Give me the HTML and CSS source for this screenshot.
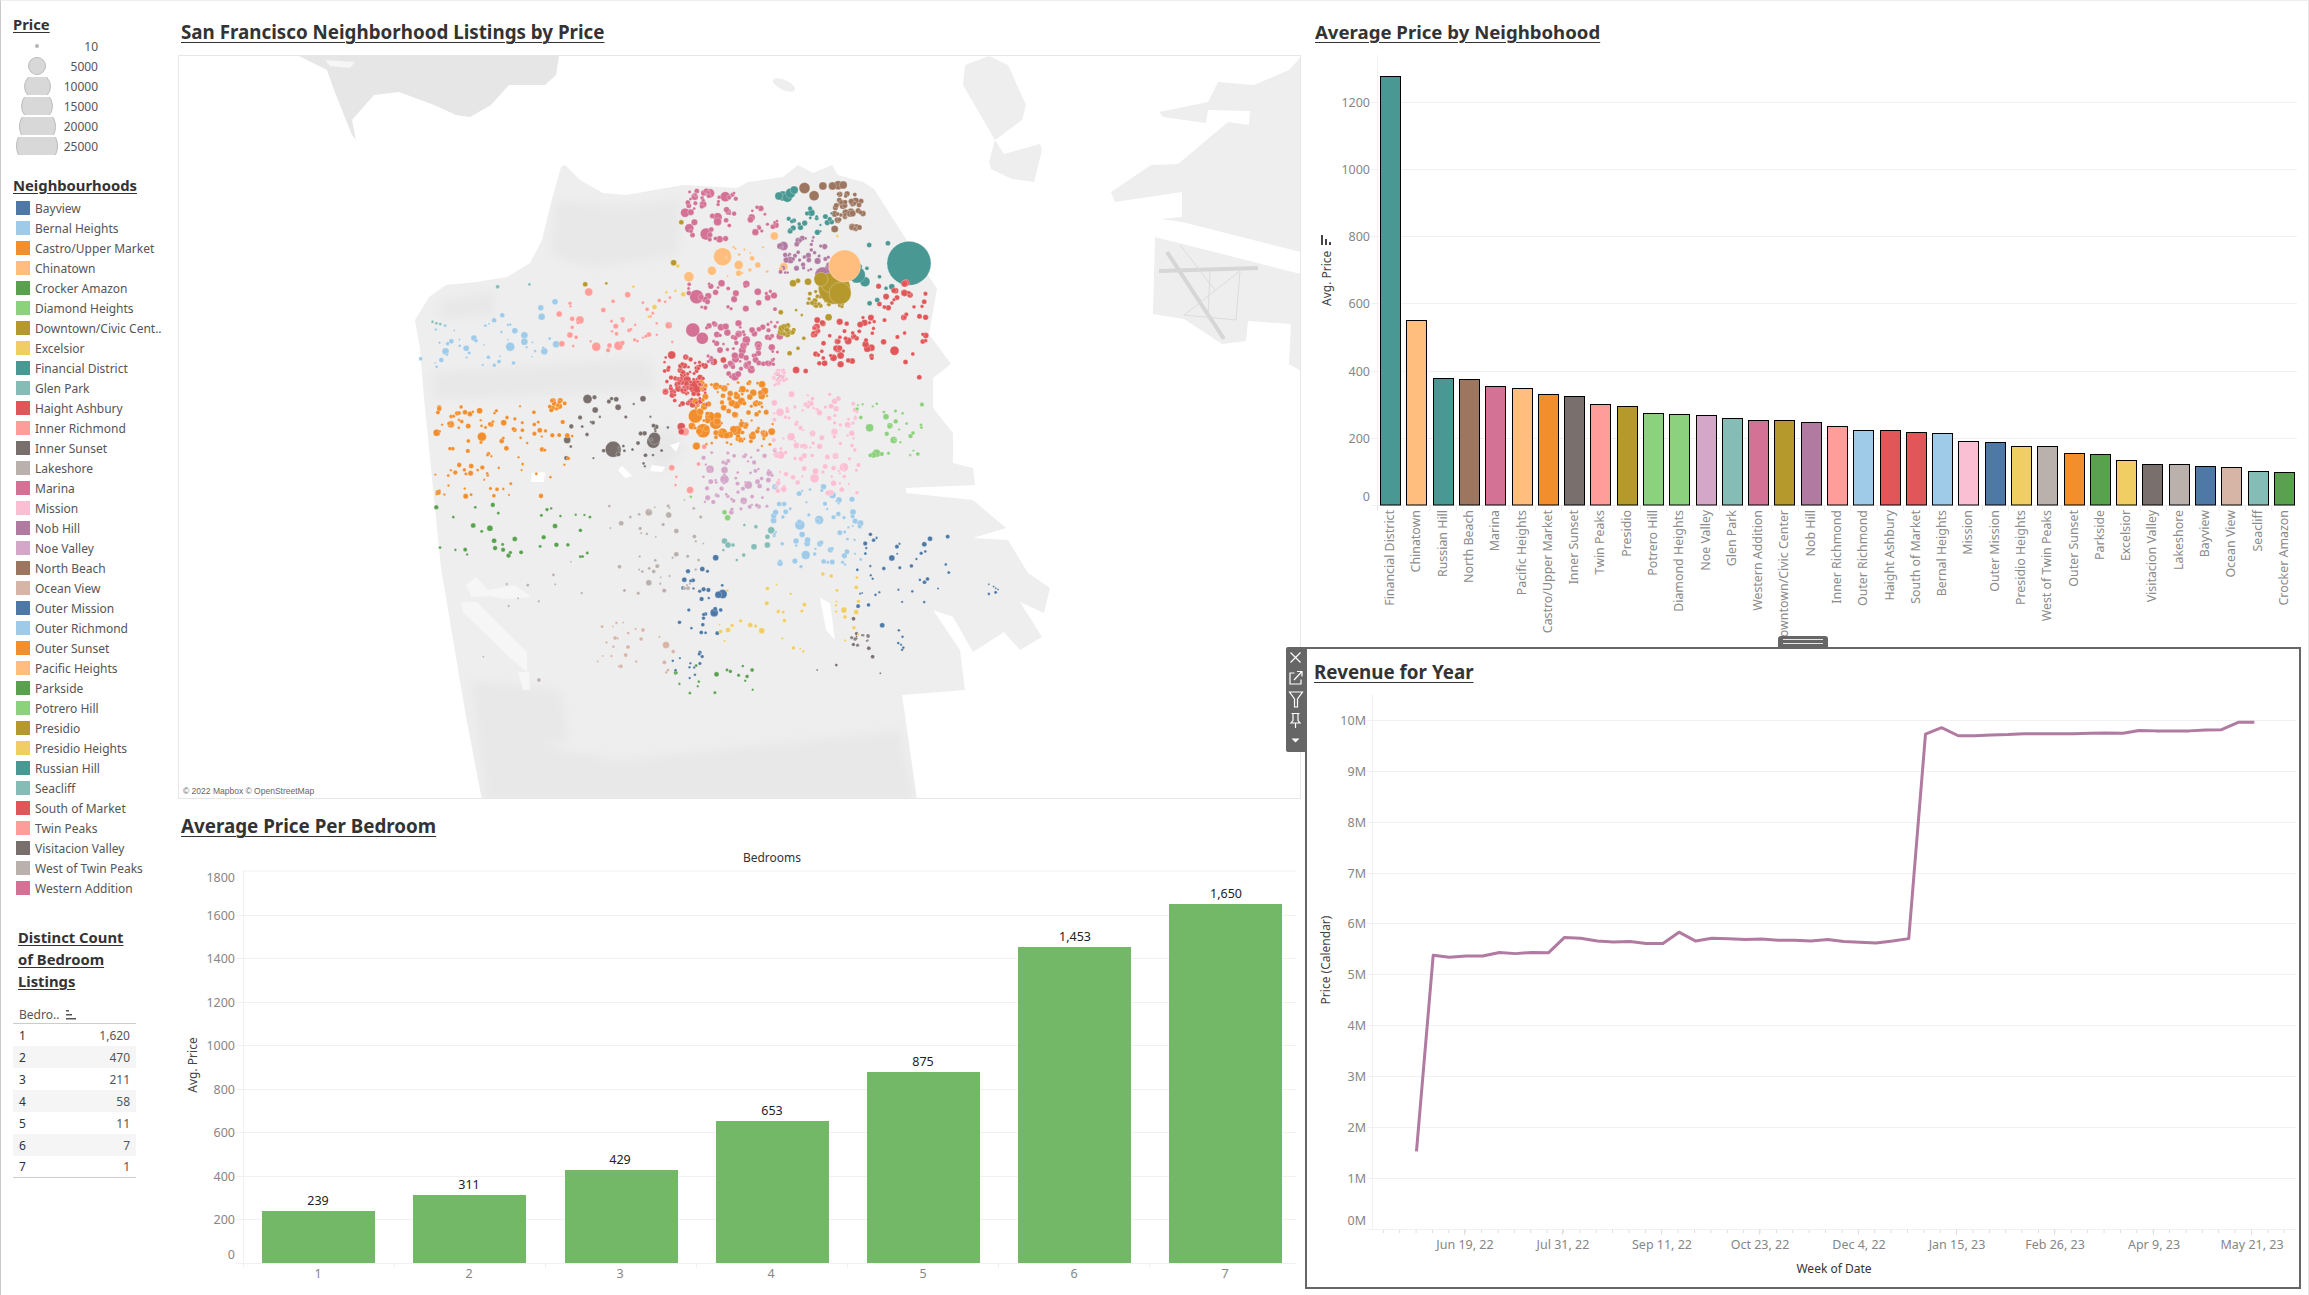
FILE: index.html
```html
<!DOCTYPE html>
<html lang="en">
<head>
<meta charset="utf-8">
<title>San Francisco Listings Dashboard</title>
<link rel="stylesheet" href="styles.css">
</head>
<body>
<main class="dash">

<aside class="side">
  <h3 class="side-title">Price</h3>
  <ul class="sizes">
    <li class="size-row"><span class="size-box"><i class="dot-key k1"></i></span><span class="size-val">10</span></li>
    <li class="size-row"><span class="size-box"><i class="dot-key k2"></i></span><span class="size-val">5000</span></li>
    <li class="size-row"><span class="size-box"><i class="dot-key k3"></i></span><span class="size-val">10000</span></li>
    <li class="size-row"><span class="size-box"><i class="dot-key k4"></i></span><span class="size-val">15000</span></li>
    <li class="size-row"><span class="size-box"><i class="dot-key k5"></i></span><span class="size-val">20000</span></li>
    <li class="size-row"><span class="size-box"><i class="dot-key k6"></i></span><span class="size-val">25000</span></li>
  </ul>
  <h3 class="side-title hoods-title">Neighbourhoods</h3>
  <ul class="hoods">
    <li><i class="sw blue"></i>Bayview</li>
    <li><i class="sw sky"></i>Bernal Heights</li>
    <li><i class="sw orange"></i>Castro/Upper Market</li>
    <li><i class="sw peach"></i>Chinatown</li>
    <li><i class="sw green"></i>Crocker Amazon</li>
    <li><i class="sw mint"></i>Diamond Heights</li>
    <li><i class="sw olive"></i>Downtown/Civic Cent..</li>
    <li><i class="sw yellow"></i>Excelsior</li>
    <li><i class="sw teal"></i>Financial District</li>
    <li><i class="sw foam"></i>Glen Park</li>
    <li><i class="sw red"></i>Haight Ashbury</li>
    <li><i class="sw salmon"></i>Inner Richmond</li>
    <li><i class="sw slate"></i>Inner Sunset</li>
    <li><i class="sw stone"></i>Lakeshore</li>
    <li><i class="sw rose"></i>Marina</li>
    <li><i class="sw blush"></i>Mission</li>
    <li><i class="sw plum"></i>Nob Hill</li>
    <li><i class="sw lilac"></i>Noe Valley</li>
    <li><i class="sw brown"></i>North Beach</li>
    <li><i class="sw tan"></i>Ocean View</li>
    <li><i class="sw blue"></i>Outer Mission</li>
    <li><i class="sw sky"></i>Outer Richmond</li>
    <li><i class="sw orange"></i>Outer Sunset</li>
    <li><i class="sw peach"></i>Pacific Heights</li>
    <li><i class="sw green"></i>Parkside</li>
    <li><i class="sw mint"></i>Potrero Hill</li>
    <li><i class="sw olive"></i>Presidio</li>
    <li><i class="sw yellow"></i>Presidio Heights</li>
    <li><i class="sw teal"></i>Russian Hill</li>
    <li><i class="sw foam"></i>Seacliff</li>
    <li><i class="sw red"></i>South of Market</li>
    <li><i class="sw salmon"></i>Twin Peaks</li>
    <li><i class="sw slate"></i>Visitacion Valley</li>
    <li><i class="sw stone"></i>West of Twin Peaks</li>
    <li><i class="sw rose"></i>Western Addition</li>
  </ul>
  <h3 class="side-title count-title">Distinct Count of Bedroom Listings</h3>
  <div class="tbl">
    <div class="tbl-head">Bedro..<svg class="sort-ic" width="11" height="10" viewBox="0 0 11 10"><rect width="3" height="1.5" y="0"/><rect width="6" height="1.5" y="4"/><rect width="10" height="1.5" y="8"/></svg></div>
    <div class="tbl-row"><b>1</b><span>1,620</span></div>
    <div class="tbl-row alt"><b>2</b><span>470</span></div>
    <div class="tbl-row"><b>3</b><span>211</span></div>
    <div class="tbl-row alt"><b>4</b><span>58</span></div>
    <div class="tbl-row"><b>5</b><span>11</span></div>
    <div class="tbl-row alt"><b>6</b><span>7</span></div>
    <div class="tbl-row"><b>7</b><span>1</span></div>
  </div>
</aside>

<section class="mid">
  <h2 class="title map-title">San Francisco Neighborhood Listings by Price</h2>
  <div class="map-frame">
    <svg class="map" width="1121" height="742" viewBox="179 56 1121 742">
      <defs>
        <filter id="soft" x="-10%" y="-10%" width="120%" height="120%"><feGaussianBlur stdDeviation="5"/></filter>
        <filter id="edge" x="-2%" y="-2%" width="104%" height="104%"><feGaussianBlur stdDeviation=".6"/></filter>
        <polygon id="coast" points="415,320 429,297 446,285 476,282 507,277 530,263 542,240 551,203 561,167 565,165 580,180 603,193 626,195 683,185 737,188 748,182 783,177 798,165 813,173 832,165 838,175 863,182 874,189 906,239 937,289 929,334 951,364 933,378 933,408 953,433 953,463 973,468 975,485 906,488 906,493 973,500 1006,528 973,538 1008,540 1028,573 1050,588 1044,613 1020,602 1042,637 1020,650 1004,632 973,652 953,617 933,610 960,650 965,690 902,695 906,722 917,800 482,800 466,717 441,568 424,398 420,349"/>
        <clipPath id="coast-clip"><use href="#coast"/></clipPath>
      </defs>
      <g class="land-dark" filter="url(#edge)">
        <polygon points="299,56 327,70 334,90 352,135 356,140 352,120 374,95 399,92 434,105 456,115 470,117 491,105 509,85 545,85 556,75 559,56"/>
      </g>
      <g class="land-top-gap" filter="url(#edge)">
        <polygon points="325,60 355,62 350,68 330,66"/>
      </g>
      <g class="land" filter="url(#edge)">
        <ellipse cx="784" cy="85" rx="12" ry="5" transform="rotate(25 784 85)"/>
        <polygon points="965,65 989,56 1008,65 1026,105 1022,120 995,140 963,85"/>
        <polygon points="995,140 1004,154 1040,144 1042,150 1034,182 1012,179 991,169 989,162"/>
        <polygon points="1159,112 1208,102 1218,82 1254,85 1289,70 1301,57 1301,252 1182,222 1161,219 1182,217 1182,192 1115,202 1111,192 1151,165 1178,164 1228,122 1249,125 1250,111 1208,110 1206,123 1163,117"/>
        <polygon points="1155,237 1301,274 1301,371 1289,364 1291,324 1248,321 1246,341 1222,344 1184,319 1153,314"/>
        <use href="#coast"/>
      </g>
      <g clip-path="url(#coast-clip)">
        <g class="land-shade" filter="url(#soft)">
          <polygon points="555,200 604,205 626,207 680,198 680,255 590,268 550,255"/>
          <polygon points="431,372 648,358 658,390 433,400"/>
          <polygon points="438,302 495,290 494,315 440,320"/>
          <polygon points="480,735 620,760 900,730 915,800 485,800"/>
          <polygon points="470,680 560,690 570,740 480,760"/>
          <polygon points="640,445 670,425 685,450 660,475"/>
        </g>
      </g>
      <g class="land-lake" filter="url(#edge)">
        <polygon points="466,585 476,577 488,590 515,585 531,597 505,599 490,596 472,597"/>
        <polygon points="461,602 477,602 527,652 527,672 509,657 463,612"/>
        <polygon points="518,672 529,672 530,690 523,690"/>
      </g>
      <g class="land-gap">
        <polygon points="532,473 545,472 544,482 531,482"/>
        <polygon points="652,465 665,467 662,472 650,471"/>
        <polygon points="622,466 632,476 625,478 618,470"/>
        <polygon points="670,445 680,442 676,452"/>
        <polygon points="820,598 830,603 835,640 826,630"/>
      </g>
      <g class="runways">
        <line x1="1167" y1="252" x2="1224" y2="339"/>
        <line x1="1159" y1="271" x2="1258" y2="268"/>
      </g>
      <g class="taxi">
        <line x1="1184" y1="315" x2="1236" y2="320"/>
        <line x1="1236" y1="320" x2="1240" y2="271"/>
        <line x1="1210" y1="271" x2="1208" y2="316"/>
        <line x1="1184" y1="315" x2="1240" y2="271"/>
        <line x1="1180" y1="245" x2="1215" y2="290"/>
      </g>
      <g id="dots"></g>
      <rect class="attr-bg" x="180" y="784" width="128" height="13"/>
      <text class="attr" x="183" y="794">© 2022 Mapbox © OpenStreetMap</text>
    </svg>
  </div>

  <h2 class="title bed-title">Average Price Per Bedroom</h2>
  <svg class="chart" width="1124" height="455" viewBox="178 840 1124 455">
    <text class="ax-head" x="772" y="862" text-anchor="middle">Bedrooms</text>
    <g class="grid">
      <line x1="243" y1="871" x2="1296" y2="871"/>
      <line x1="236" y1="915.5" x2="1296" y2="915.5"/>
      <line x1="236" y1="958.5" x2="1296" y2="958.5"/>
      <line x1="236" y1="1002.5" x2="1296" y2="1002.5"/>
      <line x1="236" y1="1045.5" x2="1296" y2="1045.5"/>
      <line x1="236" y1="1089.5" x2="1296" y2="1089.5"/>
      <line x1="236" y1="1132.5" x2="1296" y2="1132.5"/>
      <line x1="236" y1="1176.5" x2="1296" y2="1176.5"/>
      <line x1="236" y1="1219.5" x2="1296" y2="1219.5"/>
      <line x1="236" y1="1263.5" x2="1296" y2="1263.5"/>
      <line x1="243.5" y1="870" x2="243.5" y2="1268"/>
      <line x1="394.5" y1="1263" x2="394.5" y2="1268"/>
      <line x1="545.5" y1="1263" x2="545.5" y2="1268"/>
      <line x1="696.5" y1="1263" x2="696.5" y2="1268"/>
      <line x1="847.5" y1="1263" x2="847.5" y2="1268"/>
      <line x1="998.5" y1="1263" x2="998.5" y2="1268"/>
      <line x1="1149.5" y1="1263" x2="1149.5" y2="1268"/>
    </g>
    <g class="tick end">
      <text x="235" y="882">1800</text>
      <text x="235" y="920">1600</text>
      <text x="235" y="963">1400</text>
      <text x="235" y="1007">1200</text>
      <text x="235" y="1050">1000</text>
      <text x="235" y="1094">800</text>
      <text x="235" y="1137">600</text>
      <text x="235" y="1181">400</text>
      <text x="235" y="1224">200</text>
      <text x="235" y="1259">0</text>
    </g>
    <text class="ax-title" transform="translate(197 1065) rotate(-90)" text-anchor="middle">Avg. Price</text>
    <g class="bedbar">
      <rect x="262" y="1211" width="113" height="52"/>
      <rect x="413" y="1195" width="113" height="68"/>
      <rect x="565" y="1170" width="113" height="93"/>
      <rect x="716" y="1121" width="113" height="142"/>
      <rect x="867" y="1072" width="113" height="191"/>
      <rect x="1018" y="947" width="113" height="316"/>
      <rect x="1169" y="904" width="113" height="359"/>
    </g>
    <g class="val">
      <text x="318" y="1205">239</text>
      <text x="469" y="1189">311</text>
      <text x="620" y="1164">429</text>
      <text x="772" y="1115">653</text>
      <text x="923" y="1066">875</text>
      <text x="1075" y="941">1,453</text>
      <text x="1226" y="898">1,650</text>
    </g>
    <g class="tick mid-a">
      <text x="318" y="1278">1</text>
      <text x="469" y="1278">2</text>
      <text x="620" y="1278">3</text>
      <text x="771" y="1278">4</text>
      <text x="923" y="1278">5</text>
      <text x="1074" y="1278">6</text>
      <text x="1225" y="1278">7</text>
    </g>
  </svg>
</section>

<section class="right">
  <div class="top-chart">
    <h2 class="title nb-title">Average Price by Neighbohood</h2>
    <svg class="chart" width="1007" height="602" viewBox="1301 45 1007 602">
      <g class="grid">
        <line x1="1376.5" y1="55" x2="1376.5" y2="509"/>
        <line x1="1370" y1="102.5" x2="2296" y2="102.5"/>
        <line x1="1370" y1="169.5" x2="2296" y2="169.5"/>
        <line x1="1370" y1="236.5" x2="2296" y2="236.5"/>
        <line x1="1370" y1="303.5" x2="2296" y2="303.5"/>
        <line x1="1370" y1="371.5" x2="2296" y2="371.5"/>
        <line x1="1370" y1="438.5" x2="2296" y2="438.5"/>
        <line x1="1370" y1="505.5" x2="2296" y2="505.5"/>
      </g>
      <g class="nticks"><line x1="1376" y1="508" x2="2296" y2="508"/></g>
      <g class="tick end">
        <text x="1369" y="107">1200</text>
        <text x="1369" y="174">1000</text>
        <text x="1369" y="241">800</text>
        <text x="1369" y="308">600</text>
        <text x="1369" y="376">400</text>
        <text x="1369" y="443">200</text>
        <text x="1369" y="501">0</text>
      </g>
      <text class="ax-title" transform="translate(1330 306) rotate(-90)">Avg. Price</text>
      <g class="sort-ax">
        <rect x="1320" y="235" width="2" height="10"/>
        <rect x="1324" y="239" width="2" height="6"/>
        <rect x="1328" y="242" width="2" height="3"/>
      </g>
      <g class="nbars">
        <rect class="teal" x="1379.5" y="76.5" width="20" height="428.5"/>
        <rect class="peach" x="1405.5" y="320.5" width="20" height="184.5"/>
        <rect class="teal" x="1432.5" y="378.5" width="20" height="126.5"/>
        <rect class="brown" x="1458.5" y="379.5" width="20" height="125.5"/>
        <rect class="rose" x="1484.5" y="386.5" width="20" height="118.5"/>
        <rect class="peach" x="1511.5" y="388.5" width="20" height="116.5"/>
        <rect class="orange" x="1537.5" y="394.5" width="20" height="110.5"/>
        <rect class="slate" x="1563.5" y="396.5" width="20" height="108.5"/>
        <rect class="salmon" x="1589.5" y="404.5" width="20" height="100.5"/>
        <rect class="olive" x="1616.5" y="406.5" width="20" height="98.5"/>
        <rect class="mint" x="1642.5" y="413.5" width="20" height="91.5"/>
        <rect class="mint" x="1668.5" y="414.5" width="20" height="90.5"/>
        <rect class="lilac" x="1695.5" y="415.5" width="20" height="89.5"/>
        <rect class="foam" x="1721.5" y="418.5" width="20" height="86.5"/>
        <rect class="rose" x="1747.5" y="420.5" width="20" height="84.5"/>
        <rect class="olive" x="1773.5" y="420.5" width="20" height="84.5"/>
        <rect class="plum" x="1800.5" y="422.5" width="20" height="82.5"/>
        <rect class="salmon" x="1826.5" y="426.5" width="20" height="78.5"/>
        <rect class="sky" x="1852.5" y="430.5" width="20" height="74.5"/>
        <rect class="red" x="1879.5" y="430.5" width="20" height="74.5"/>
        <rect class="red" x="1905.5" y="432.5" width="20" height="72.5"/>
        <rect class="sky" x="1931.5" y="433.5" width="20" height="71.5"/>
        <rect class="blush" x="1957.5" y="441.5" width="20" height="63.5"/>
        <rect class="blue" x="1984.5" y="442.5" width="20" height="62.5"/>
        <rect class="yellow" x="2010.5" y="446.5" width="20" height="58.5"/>
        <rect class="stone" x="2036.5" y="446.5" width="20" height="58.5"/>
        <rect class="orange" x="2063.5" y="453.5" width="20" height="51.5"/>
        <rect class="green" x="2089.5" y="454.5" width="20" height="50.5"/>
        <rect class="yellow" x="2115.5" y="460.5" width="20" height="44.5"/>
        <rect class="slate" x="2141.5" y="464.5" width="20" height="40.5"/>
        <rect class="stone" x="2168.5" y="464.5" width="20" height="40.5"/>
        <rect class="blue" x="2194.5" y="466.5" width="20" height="38.5"/>
        <rect class="tan" x="2220.5" y="467.5" width="20" height="37.5"/>
        <rect class="foam" x="2247.5" y="471.5" width="20" height="33.5"/>
        <rect class="green" x="2273.5" y="472.5" width="20" height="32.5"/>
      </g>
      <g class="cats">
        <text transform="translate(1393 510) rotate(-90)">Financial District</text>
        <text transform="translate(1419 510) rotate(-90)">Chinatown</text>
        <text transform="translate(1446 510) rotate(-90)">Russian Hill</text>
        <text transform="translate(1472 510) rotate(-90)">North Beach</text>
        <text transform="translate(1498 510) rotate(-90)">Marina</text>
        <text transform="translate(1525 510) rotate(-90)">Pacific Heights</text>
        <text transform="translate(1551 510) rotate(-90)">Castro/Upper Market</text>
        <text transform="translate(1577 510) rotate(-90)">Inner Sunset</text>
        <text transform="translate(1603 510) rotate(-90)">Twin Peaks</text>
        <text transform="translate(1630 510) rotate(-90)">Presidio</text>
        <text transform="translate(1656 510) rotate(-90)">Potrero Hill</text>
        <text transform="translate(1682 510) rotate(-90)">Diamond Heights</text>
        <text transform="translate(1709 510) rotate(-90)">Noe Valley</text>
        <text transform="translate(1735 510) rotate(-90)">Glen Park</text>
        <text transform="translate(1761 510) rotate(-90)">Western Addition</text>
        <text transform="translate(1787 510) rotate(-90)">Downtown/Civic Center</text>
        <text transform="translate(1814 510) rotate(-90)">Nob Hill</text>
        <text transform="translate(1840 510) rotate(-90)">Inner Richmond</text>
        <text transform="translate(1866 510) rotate(-90)">Outer Richmond</text>
        <text transform="translate(1893 510) rotate(-90)">Haight Ashbury</text>
        <text transform="translate(1919 510) rotate(-90)">South of Market</text>
        <text transform="translate(1945 510) rotate(-90)">Bernal Heights</text>
        <text transform="translate(1971 510) rotate(-90)">Mission</text>
        <text transform="translate(1998 510) rotate(-90)">Outer Mission</text>
        <text transform="translate(2024 510) rotate(-90)">Presidio Heights</text>
        <text transform="translate(2050 510) rotate(-90)">West of Twin Peaks</text>
        <text transform="translate(2077 510) rotate(-90)">Outer Sunset</text>
        <text transform="translate(2103 510) rotate(-90)">Parkside</text>
        <text transform="translate(2129 510) rotate(-90)">Excelsior</text>
        <text transform="translate(2155 510) rotate(-90)">Visitacion Valley</text>
        <text transform="translate(2182 510) rotate(-90)">Lakeshore</text>
        <text transform="translate(2208 510) rotate(-90)">Bayview</text>
        <text transform="translate(2234 510) rotate(-90)">Ocean View</text>
        <text transform="translate(2261 510) rotate(-90)">Seacliff</text>
        <text transform="translate(2287 510) rotate(-90)">Crocker Amazon</text>
      </g>
    </svg>
  </div>

  <div class="rev-panel">
    <div class="toolbar">
      <svg width="19" height="105" viewBox="0 0 19 105">
        <path class="tb-line" d="M4.500 5.500l10 10M14.500 5.500l-10 10"/>
        <path class="tb-line" d="M8.500 26H4v11h11v-4.500M8 33l7.500-8M11 24.500h5v5"/>
        <path class="tb-line" d="M3.500 45h13l-5 7v8h-3v-8z"/>
        <path class="tb-line" d="M5.500 66.500h8M7 66.500v7l-2 2.500h9l-2-2.500v-7M9.500 76v5"/>
        <path class="tb-fill" d="M5.500 91.500h8l-4 4z"/>
      </svg>
    </div>
    <div class="handle"><i></i><i></i></div>
    <h2 class="title rev-title">Revenue for Year</h2>
    <svg class="chart" width="992" height="602" viewBox="1307 685 992 602">
      <g class="grid">
        <line x1="1372.500" y1="694" x2="1372.500" y2="1230"/>
        <line x1="1367" y1="720.500" x2="2296" y2="720.500"/>
        <line x1="1367" y1="771.500" x2="2296" y2="771.500"/>
        <line x1="1367" y1="822.500" x2="2296" y2="822.500"/>
        <line x1="1367" y1="873.500" x2="2296" y2="873.500"/>
        <line x1="1367" y1="923.500" x2="2296" y2="923.500"/>
        <line x1="1367" y1="974.500" x2="2296" y2="974.500"/>
        <line x1="1367" y1="1025.500" x2="2296" y2="1025.500"/>
        <line x1="1367" y1="1076.500" x2="2296" y2="1076.500"/>
        <line x1="1367" y1="1127.500" x2="2296" y2="1127.500"/>
        <line x1="1367" y1="1178.500" x2="2296" y2="1178.500"/>
        <line x1="1367" y1="1229.500" x2="2296" y2="1229.500"/>
      </g>
      <g class="minor"><line x1="1382.800" y1="1231.500" x2="2296" y2="1231.500"/></g>
      <g class="major">
        <line x1="1464.500" y1="1229" x2="1464.500" y2="1235"/>
        <line x1="1562.500" y1="1229" x2="1562.500" y2="1235"/>
        <line x1="1661.500" y1="1229" x2="1661.500" y2="1235"/>
        <line x1="1759.500" y1="1229" x2="1759.500" y2="1235"/>
        <line x1="1858.500" y1="1229" x2="1858.500" y2="1235"/>
        <line x1="1956.500" y1="1229" x2="1956.500" y2="1235"/>
        <line x1="2054.500" y1="1229" x2="2054.500" y2="1235"/>
        <line x1="2153.500" y1="1229" x2="2153.500" y2="1235"/>
        <line x1="2251.500" y1="1229" x2="2251.500" y2="1235"/>
      </g>
      <g class="tick end">
        <text x="1366" y="725">10M</text>
        <text x="1366" y="776">9M</text>
        <text x="1366" y="827">8M</text>
        <text x="1366" y="878">7M</text>
        <text x="1366" y="928">6M</text>
        <text x="1366" y="979">5M</text>
        <text x="1366" y="1030">4M</text>
        <text x="1366" y="1081">3M</text>
        <text x="1366" y="1132">2M</text>
        <text x="1366" y="1183">1M</text>
        <text x="1366" y="1225">0M</text>
      </g>
      <text class="ax-title" transform="translate(1330 960) rotate(-90)" text-anchor="middle">Price (Calendar)</text>
      <g class="rev-line" transform="translate(1300 660) scale(.6435 .405)">
        <polyline vector-effect="non-scaling-stroke" points="181,1213 207,729 232,734 258,731 284,731 310,722 335,725 360,722 386,723 411,685 436,687 462,694 487,696 513,695 538,700 564,700 589,672 615,694 640,687 666,688 692,690 717,689 743,692 768,692 794,694 820,690 845,695 870,697 895,699 921,694 946,688 972,183 997,167 1023,187 1048,187 1074,185 1100,184 1125,182 1151,182 1177,182 1202,182 1228,181 1253,180 1279,181 1304,174 1330,175 1356,175 1382,175 1407,173 1432,172 1458,154 1483,154"/>
      </g>
      <g class="tick mid-a">
        <text x="1465" y="1249">Jun 19, 22</text>
        <text x="1563" y="1249">Jul 31, 22</text>
        <text x="1662" y="1249">Sep 11, 22</text>
        <text x="1760" y="1249">Oct 23, 22</text>
        <text x="1859" y="1249">Dec 4, 22</text>
        <text x="1957" y="1249">Jan 15, 23</text>
        <text x="2055" y="1249">Feb 26, 23</text>
        <text x="2154" y="1249">Apr 9, 23</text>
        <text x="2252" y="1249">May 21, 23</text>
      </g>
      <text class="ax-head" x="1834" y="1273" text-anchor="middle">Week of Date</text>
    </svg>
  </div>
</section>

</main>
<script src="dots.js"></script>
</body>
</html>
```

FILE: styles.css
```css
* { box-sizing: border-box; }
html, body { margin: 0; padding: 0; background: #fff; }
body { font-family: "Noto Sans", "Open Sans", sans-serif; color: #444; overflow: hidden; }
ul { list-style: none; margin: 0; padding: 0; }
h2, h3 { margin: 0; }

.dash {
  display: grid;
  grid-template-columns: 177px 1124px 1007px;
  width: 2309px;
  height: 1295px;
  border-top: 1px solid #eee;
  border-left: 1px solid #c9c9c9;
  border-right: 1px solid #e6e6e6;
  overflow: hidden;
}

/* sidebar */
.side { padding: 13px 0 0 12px; }
.side-title {
  font-size: 14.800px;
  line-height: 20px;
  font-weight: 700;
  color: #333;
  text-decoration: underline;
  text-underline-offset: 2px;
  text-decoration-thickness: 1px;
}
.sizes { margin-top: 2px; width: 85px; }
.size-row { display: flex; height: 20px; align-items: center; justify-content: space-between; font-size: 12px; color: #555; }
.size-box { width: 48px; height: 18px; display: flex; align-items: center; justify-content: center; overflow: hidden; }
.dot-key { flex: none; display: block; border-radius: 50%; background: #d8d8d8; border: 1.5px solid #bcbcbc; }
.k1 { width: 4px; height: 4px; background: #b5b5b5; border: 0; }
.k2 { width: 18px; height: 18px; }
.k3 { width: 27px; height: 27px; }
.k4 { width: 32px; height: 32px; }
.k5 { width: 37px; height: 37px; }
.k6 { width: 42px; height: 42px; }
.hoods-title { margin-top: 19px; }
.hoods { margin-top: 3px; }
.hoods li { display: flex; align-items: center; height: 20px; font-size: 12px; color: #555; white-space: nowrap; }
.sw { flex: none; width: 14px; height: 14px; margin: 0 5px 0 3px; }

.blue { background: #4e79a7; fill: #4e79a7; }
.sky { background: #a0cbe8; fill: #a0cbe8; }
.orange { background: #f28e2b; fill: #f28e2b; }
.peach { background: #ffbe7d; fill: #ffbe7d; }
.green { background: #59a14f; fill: #59a14f; }
.mint { background: #8cd17d; fill: #8cd17d; }
.olive { background: #b6992d; fill: #b6992d; }
.yellow { background: #f1ce63; fill: #f1ce63; }
.teal { background: #499894; fill: #499894; }
.foam { background: #86bcb6; fill: #86bcb6; }
.red { background: #e15759; fill: #e15759; }
.salmon { background: #ff9d9a; fill: #ff9d9a; }
.slate { background: #79706e; fill: #79706e; }
.stone { background: #bab0ac; fill: #bab0ac; }
.rose { background: #d37295; fill: #d37295; }
.blush { background: #fabfd2; fill: #fabfd2; }
.plum { background: #b07aa1; fill: #b07aa1; }
.lilac { background: #d4a6c8; fill: #d4a6c8; }
.brown { background: #9d7660; fill: #9d7660; }
.tan { background: #d7b5a6; fill: #d7b5a6; }

.count-title { margin-top: 28px; padding-left: 5px; width: 122px; line-height: 22px; }
.tbl { margin-top: 14px; width: 123px; font-size: 12px; }
.tbl-head { height: 18px; padding-left: 6px; border-bottom: 1px solid #ccc; display: flex; align-items: center; gap: 7px; color: #555; line-height: 16px; }
.sort-ic { fill: #555; }
.tbl-row { height: 22px; display: flex; align-items: center; justify-content: space-between; padding: 0 6px; color: #555; }
.tbl-row b { font-weight: 400; color: #333; }
.tbl-row.alt { background: #f5f5f5; }
.tbl-row:last-child { border-bottom: 1px solid #ccc; }

/* titles */
.title { font-size: 18.800px; line-height: 26px; font-weight: 700; color: #333; text-decoration: underline; text-underline-offset: 3px; text-decoration-thickness: 1px; }
.map-title { padding: 18px 0 10px 3px; }
.bed-title { padding: 14px 0 1px 3px; }
.nb-title { padding: 18px 0 0 13px; font-size: 18.600px; }
.rev-title { padding: 10px 0 0 7px; }

/* map */
.map-frame { width: 1123px; height: 744px; border: 1px solid #e6e6e6; }
.map, .chart { display: block; }
.map { background: #fff; }
.land { fill: #eeeeee; }
.land-dark { fill: #e6e6e6; }
.land-top-gap { fill: #f6f6f6; }
.land-shade { fill: #e8e8e8; }
.land-lake { fill: #f6f6f6; }
.land-gap { fill: #fff; }
.runways line { stroke: #d6d6d6; stroke-width: 4; }
.taxi line { stroke: #dcdcdc; stroke-width: 1; }
.dot { stroke: #fff; stroke-opacity: .5; stroke-width: .5; }
.attr-bg { fill: #fff; opacity: .85; }
.attr { font: 8.500px "Liberation Sans", Arial, sans-serif; fill: #666; }

/* charts */
.chart text { font-family: "Noto Sans", "Open Sans", sans-serif; }
.grid line { stroke: #f1f1f1; stroke-width: 1; }
.tick text { font-size: 12.500px; fill: #868686; }
.end text { text-anchor: end; }
.mid-a text { text-anchor: middle; }
.ax-title { font-size: 12px; fill: #444; }
.ax-head { font-size: 12px; fill: #333; }
.val text { font-size: 12.500px; fill: #222; text-anchor: middle; }
.bedbar rect { fill: #72b866; }
.sort-ax rect { fill: #444; }
.nbars rect { stroke: #000; stroke-width: 1; }
.nticks line { stroke: #e8e8e8; stroke-width: 5; stroke-dasharray: 1 25.300; }
.cats text { font-size: 12.400px; fill: #8a8a8a; text-anchor: end; }
.rev-line polyline { fill: none; stroke: #b07aa1; stroke-width: 3; stroke-linejoin: round; }
.minor line { stroke: #ddd; stroke-width: 3; stroke-dasharray: 1 15.380; }
.major line { stroke: #e2e2e2; stroke-width: 1; }

/* right column */
.top-chart { height: 646px; overflow: hidden; }
.rev-panel { position: relative; width: 996px; height: 642px; margin-left: 3px; border: 2px solid #666; }
.toolbar { position: absolute; left: -21px; top: -2px; width: 19px; height: 105px; background: #666; border-radius: 2px 0 0 2px; }
.toolbar svg { display: block; }
.tb-line { fill: none; stroke: #fff; stroke-width: 1.200; }
.tb-fill { fill: #fff; }
.handle { position: absolute; left: 471px; top: -13px; width: 50px; height: 11px; background: #666; border-radius: 3px 3px 0 0; display: flex; flex-direction: column; justify-content: center; gap: 3px; padding: 0 5px; }
.handle i { display: block; height: 1px; background: #e6e6e6; }
```

FILE: dots.js
```js
// Listings on the map, grouped by neighbourhood. Coordinates are in the map's page space.
(function () {
  var seed = 20220611;
  function rnd() { seed = (seed * 1664525 + 1013904223) % 4294967296; return seed / 4294967296; }
  var toX = function (X) { return 400 + X / 2.613; };
  var toY = function (Y) { return 160 + Y / 3; };
  var dots = [];
  function add(color, list) { list.forEach(function (d) { dots.push([color, toX(d[0]), toY(d[1]), d[2]]); }); }
  function scatter(color, X0, Y0, X1, Y1, n, r0, r1) {
    for (var i = 0; i < n; i++) {
      var t = rnd();
      dots.push([color, toX(X0 + rnd() * (X1 - X0)), toY(Y0 + rnd() * (Y1 - Y0)), r0 + Math.pow(t, 1.3) * (r1 - r0)]);
    }
  }
  // Marina and Western Addition
  add('rose', [[745,158,4.5],[756,205,4.5],[800,222,6],[830,172,4.5],[830,185,4],[810,100,4.5],[850,110,5],[770,110,3.5],[835,238,3.5],[775,410,7],[765,510,7],[790,535,6],[905,372,3.5],[935,395,3.5],[840,370,3.5],[875,650,4],[905,540,4],[920,510,3]]);
  scatter('rose', 750,90,880,240,40,1.5,3.5);
  scatter('rose', 910,140,985,220,15,1.5,3.5);
  scatter('rose', 745,370,990,450,26,1.5,3.5);
  scatter('rose', 800,485,1000,660,85,1.5,3.8);
  // Russian Hill and Financial District
  add('teal', [[1000,108,5],[1012,112,5],[1020,100,5],[1030,90,4],[990,108,4],[1075,158,3.5],[1330,310,22],[1215,365,5],[1285,380,3],[1190,360,3],[1275,250,2.5],[1226,255,2.5],[1247,420,2.5],[1227,430,2.5],[1253,350,2],[1270,385,2],[1200,320,3],[1220,325,2]]);
  scatter('teal', 990,140,1130,220,22,1.2,3);
  // North Beach
  add('brown', [[1057,84,5.5],[1082,107,5],[1105,78,4],[1130,78,4],[1145,76,4.5],[1158,75,4]]);
  scatter('brown', 1135,100,1210,210,42,1.8,3.8);
  // Nob Hill
  add('plum', [[1002,258,4.5],[1020,300,3.5]]);
  scatter('plum', 990,230,1140,340,46,1.3,3.2);
  // Pacific Heights
  add('peach', [[843,290,9],[815,332,4.5],[755,350,5],[885,315,4.5],[978,228,4],[1003,320,4],[935,315,3],[920,295,2.5],[885,340,3]]);
  scatter('peach', 800,260,1000,350,12,1,2.2);
  // Presidio Heights and Excelsior
  add('yellow', [[726,318,2],[610,380,1.5],[696,397,1.5],[720,392,1.5],[740,403,2.5],[665,441,2.5],[650,470,1.5],[1143,228,1.5]]);
  // Seacliff and Glen Park
  add('foam', [[255,380,2],[338,373,1.5],[85,485,1.5],[95,490,1.5],[105,492,1.5],[970,1111,3.5],[848,1143,3],[857,1155,3],[925,1160,3],[960,1155,3],[960,1130,2.5],[930,1100,2],[900,1095,1.5],[870,1155,2],[845,1170,1.5],[898,1185,2],[880,1200,1.5]]);
  // Outer Richmond
  add('sky', [[405,425,3],[368,443,3],[370,470,3.5],[267,466,2.5],[246,481,2.5],[300,512,3],[325,526,3.5],[325,545,3.5],[288,560,4.5],[377,574,3.5],[408,553,3.5],[193,534,3],[119,574,3.5],[108,600,2.5],[54,596,2],[134,544,2.5],[173,565,3],[96,620,1.500]]);
  scatter('sky', 80,490,400,620,32,1,2.2);
  // Inner Richmond
  add('salmon', [[493,396,4],[416,462,3],[470,480,4],[444,525,3],[513,560,4.5],[571,557,4.5],[595,404,3],[702,496,3.5],[423,551,3]]);
  scatter('salmon', 440,400,720,580,40,1.3,2.6);
  // Haight Ashbury
  add('red', [[772,680,7],[750,660,4],[710,585,4],[745,685,3.5],[735,800,4],[735,815,3],[820,605,3.5],[845,600,3]]);
  scatter('red', 690,590,800,740,85,1.3,3.4);
  // South of Market
  add('red', [[1292,572,4.5],[1221,566,3.5],[1321,606,2.5],[1357,652,2.5],[1340,582,2],[1035,630,3.5],[1060,633,2.500]]);
  scatter('red', 1080,470,1240,620,56,1.8,3.6);
  scatter('red', 1250,365,1375,560,34,1.8,3.5);
  // Castro/Upper Market
  add('orange', [[772,768,7],[792,812,7],[825,790,6],[810,770,5],[880,812,5],[843,820,5],[945,708,3.5],[895,688,3.5],[953,822,3.5]]);
  scatter('orange', 760,665,975,860,110,1.3,3.8);
  // Mission
  add('blush', [[993,757,4],[1022,830,4],[1160,922,4.5],[1083,955,4.5],[995,885,4],[1135,815,3.5]]);
  scatter('blush', 975,630,1010,690,24,1.5,2.5);
  scatter('blush', 975,700,1200,1000,110,1.3,3.2);
  // Noe Valley
  add('lilac', [[848,958,4.5],[810,928,4],[910,975,4],[898,1022,3.5],[848,930,3.5],[965,940,3]]);
  scatter('lilac', 790,870,985,1060,62,1.3,2.8);
  // Twin Peaks
  add('salmon', [[710,923,3],[758,990,3.5],[745,815,4],[795,860,2.5],[780,912,2],[720,975,1.5],[722,950,1.500]]);
  // Diamond Heights and Potrero Hill
  add('mint', [[1227,803,4],[1245,880,4],[1290,840,3.5],[1270,770,3],[1280,797,3],[1237,885,3],[848,1057,2.5],[856,1073,3],[760,1010,1.5],[743,1020,1]]);
  scatter('mint', 1190,730,1370,890,28,1.2,2.4);
  // Outer Sunset
  add('orange', [[96,818,3.5],[133,793,3.5],[214,830,4.5],[208,752,3],[271,788,3],[278,865,2.5],[186,918,2.5],[350,757,2]]);
  scatter('orange', 90,740,240,1010,55,1.2,2.7);
  scatter('orange', 240,730,450,1010,42,1.2,2.5);
  scatter('orange', 390,715,425,750,12,1.8,3);
  // Inner Sunset
  add('slate', [[557,868,8],[662,845,6.500],[665,835,6],[490,717,4.5],[510,750,3],[570,742,3],[635,716,3],[437,840,3.5],[565,718,2.500]]);
  scatter('slate', 430,710,700,930,36,1.2,2.4);
  // Parkside
  add('green', [[235,1105,3],[300,1137,2.5],[405,1098,2.5],[246,1142,2.500]]);
  scatter('green', 90,1020,500,1190,32,1.2,2.5);
  // Crocker Amazon
  add('green', [[827,1543,2.5],[920,1530,2]]);
  scatter('green', 720,1515,925,1600,15,1.2,2.2);
  // West of Twin Peaks and Lakeshore
  add('stone', [[650,1057,3.5],[702,1065,3],[578,1090,2.5],[650,1268,3],[722,1183,2.5],[722,1113,2.5],[218,1490,1],[363,1560,2]]);
  scatter('stone', 540,1035,800,1300,40,1,2.2);
  scatter('stone', 270,1170,480,1340,9,1,1.6);
  // Ocean View
  add('tan', [[695,1455,3.5],[635,1410,2]]);
  scatter('tan', 515,1380,720,1540,24,1,2.2);
  // Outer Mission
  add('blue', [[843,1302,4.5],[832,1304,3.5],[821,1358,4],[825,1193,3],[790,1227,2.5],[743,1259,2.5],[1260,1396,2.5]]);
  scatter('blue', 690,1230,850,1420,24,1.3,2.4);
  scatter('blue', 710,1470,800,1560,12,1.2,1.9);
  // Bayview
  add('blue', [[1285,1194,3],[1385,1136,2.5],[1370,1153,2.5]]);
  scatter('blue', 1190,1120,1440,1340,36,1,2.2);
  scatter('blue', 1530,1270,1565,1310,6,1,1.7);
  scatter('blue', 1290,1410,1350,1470,6,1.2,2);
  // Bernal Heights
  add('sky', [[1045,1095,5],[1095,1080,4.5],[1060,1185,4.5],[1130,1005,3.5],[1065,1140,3]]);
  scatter('sky', 975,980,1205,1220,65,1.2,3.2);
  // Excelsior
  add('yellow', [[1160,1350,3],[945,1412,3],[1192,1356,2.5],[1105,1242,2],[915,1395,2.5],[857,1410,2.5]]);
  scatter('yellow', 830,1240,1200,1480,32,1,2.2);
  // Visitacion Valley
  add('slate', [[1225,1465,2],[1235,1490,2],[1185,1376,2],[1140,1515,1.5],[1090,1530,1],[1255,1540,1]]);
  scatter('slate', 1175,1415,1225,1460,15,1,2);
  // Presidio and Downtown/Civic Center
  add('olive', [[735,187,2.5],[715,308,3],[484,373,2.5],[539,370,1.5],[1027,370,3.5],[1040,362,2.5],[1066,365,3.5],[1120,472,3.5],[995,457,2.5],[1055,535,2],[1018,580,2.5],[1040,565,2],[1035,450,1.5],[1050,465,1.5]]);
  scatter('olive', 1065,390,1100,440,12,1.8,3);
  scatter('olive', 1110,410,1170,440,10,1.5,2.5);
  scatter('olive', 995,490,1030,530,14,2,3.5);
  // The largest markers sit in the middle of Downtown; Chinatown draws over them.
  dots.sort(function (a, b) { return b[3] - a[3]; });
  add('plum', [[1105,345,8]]);
  add('teal', [[1195,345,8]]);
  add('olive', [[1135,385,16],[1125,368,10],[1100,358,7],[1150,400,11]]);
  add('peach', [[1162,318,16]]);
  var host = document.getElementById('dots');
  dots.forEach(function (d) {
    var c = document.createElementNS('http://www.w3.org/2000/svg', 'circle');
    c.setAttribute('class', 'dot ' + d[0]);
    c.setAttribute('cx', d[1].toFixed(1));
    c.setAttribute('cy', d[2].toFixed(1));
    c.setAttribute('r', d[3].toFixed(1));
    host.appendChild(c);
  });
})();
```
